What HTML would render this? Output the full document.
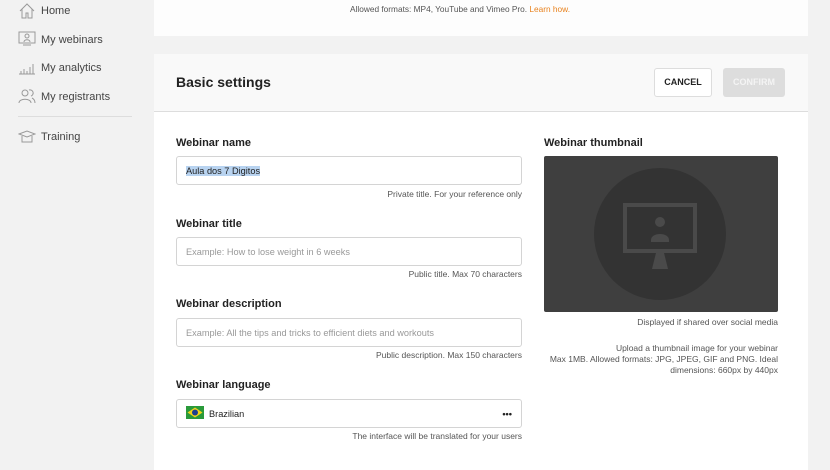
<!DOCTYPE html><html><head><style>
*{margin:0;padding:0;box-sizing:border-box}
body{width:830px;height:470px;overflow:hidden;background:#f2f2f2;font-family:"Liberation Sans",Arial,sans-serif;position:relative;color:#222}
.a{position:absolute}
.nav{left:41px;font-size:11px;color:#444}
.ic{left:18px;width:18px;height:16px}
.card{background:#fff;left:154px;width:654px}
.lab{font-size:11px;font-weight:bold;color:#222}
.inp{border:1px solid #d4d4d4;border-radius:3px;height:29px;background:#fff;font-size:9.2px;color:#999;padding:9px 9px;width:346px;left:176px}
.hint{font-size:8.5px;color:#555;text-align:right}
</style></head><body>
<svg class="a ic" style="top:3px" viewBox="0 0 18 16" fill="none" stroke="#999" stroke-width="1"><path d="M2 8L9 1l7 7M4 6v9h4v-5h2v5h4V6"/></svg>
<div class="a nav" style="top:5px">Home</div>
<svg class="a ic" style="top:31px" viewBox="0 0 18 16" fill="none" stroke="#999"><rect x="1" y="1" width="16" height="11"/><circle cx="9" cy="5" r="2"/><path d="M6 11c0-3 6-3 6 0M5 14h8"/></svg>
<div class="a nav" style="top:34px">My webinars</div>
<svg class="a ic" style="top:60px" viewBox="0 0 18 16" fill="none" stroke="#999"><path d="M1 14h16M3 14v-3M6 14v-5M9 14v-3M12 14v-7M15 14v-10"/></svg>
<div class="a nav" style="top:62px">My analytics</div>
<svg class="a ic" style="top:88px" viewBox="0 0 18 16" fill="none" stroke="#999"><circle cx="7" cy="5" r="3"/><path d="M1 15c0-5 12-5 12 0M11 2a3 3 0 0 1 2 6M14 10c2 1 3 3 3 5"/></svg>
<div class="a nav" style="top:91px">My registrants</div>
<div class="a" style="left:18px;top:116px;width:114px;height:1px;background:#ddd"></div>
<svg class="a ic" style="top:129px" viewBox="0 0 18 16" fill="none" stroke="#999"><path d="M1 5l8-3 8 3-8 3zM4 7v6h10V7"/></svg>
<div class="a nav" style="top:131px">Training</div>

<div class="a card" style="top:0;height:36px;background:#fdfdfd"></div>
<div class="a" style="left:350px;top:4px;font-size:8.3px;color:#555">Allowed formats: MP4, YouTube and Vimeo Pro. <span style="color:#e8821e">Learn how.</span></div>

<div class="a card" style="top:54px;height:416px"></div>
<div class="a card" style="top:54px;height:58px;background:#f9f9f9;border-bottom:1px solid #ddd"></div>
<div class="a" style="left:176px;top:74px;font-size:14px;font-weight:bold;color:#222">Basic settings</div>
<div class="a" style="left:654px;top:68px;width:58px;height:29px;border:1px solid #ddd;border-radius:3px;background:#fff;font-size:9px;font-weight:bold;text-align:center;line-height:27px;color:#222">CANCEL</div>
<div class="a" style="left:723px;top:68px;width:62px;height:29px;border-radius:3px;background:#ddd;font-size:9px;font-weight:bold;text-align:center;line-height:29px;color:#f4f4f4">CONFIRM</div>

<div class="a lab" style="left:176px;top:137px">Webinar name</div>
<div class="a inp" style="top:156px;color:#222"><span style="background:#b8d3f0">Aula dos 7 Digitos</span></div>
<div class="a hint" style="left:176px;width:346px;top:189px">Private title. For your reference only</div>
<div class="a lab" style="left:176px;top:218px">Webinar title</div>
<div class="a inp" style="top:237px">Example: How to lose weight in 6 weeks</div>
<div class="a hint" style="left:176px;width:346px;top:269px">Public title. Max 70 characters</div>
<div class="a lab" style="left:176px;top:298px">Webinar description</div>
<div class="a inp" style="top:318px">Example: All the tips and tricks to efficient diets and workouts</div>
<div class="a hint" style="left:176px;width:346px;top:350px">Public description. Max 150 characters</div>
<div class="a lab" style="left:176px;top:379px">Webinar language</div>
<div class="a inp" style="top:399px;color:#222;padding-left:32px">Brazilian<span style="position:absolute;right:9px;font-weight:bold">•••</span></div>
<svg class="a" style="left:186px;top:406px" width="18" height="13" viewBox="0 0 18 13"><rect width="18" height="13" fill="#2a9a3a"/><path d="M9 1.5L16.5 6.5 9 11.5 1.5 6.5z" fill="#f2d31b"/><circle cx="9" cy="6.5" r="3" fill="#1f3f8f"/></svg>
<div class="a hint" style="left:176px;width:346px;top:431px">The interface will be translated for your users</div>

<div class="a lab" style="left:544px;top:137px">Webinar thumbnail</div>
<div class="a" style="left:544px;top:156px;width:234px;height:156px;background:#3f3f3f;border-radius:2px;overflow:hidden">
<div class="a" style="left:50px;top:12px;width:132px;height:132px;border-radius:50%;background:#333"></div>
<svg class="a" style="left:78px;top:46px" width="76" height="68" viewBox="0 0 76 68"><rect x="3" y="3" width="70" height="46" fill="none" stroke="#4a4a4a" stroke-width="4"/><circle cx="38" cy="20" r="5" fill="#4a4a4a"/><path d="M29 38c0-8 18-8 18 0v2H29z" fill="#4a4a4a"/><path d="M34 51h8l4 16H30z" fill="#4a4a4a"/></svg>
</div>
<div class="a hint" style="left:540px;width:238px;top:317px">Displayed if shared over social media</div>
<div class="a hint" style="left:530px;width:248px;top:343px;line-height:11px">Upload a thumbnail image for your webinar<br>Max 1MB. Allowed formats: JPG, JPEG, GIF and PNG. Ideal<br>dimensions: 660px by 440px</div>
</body></html>
